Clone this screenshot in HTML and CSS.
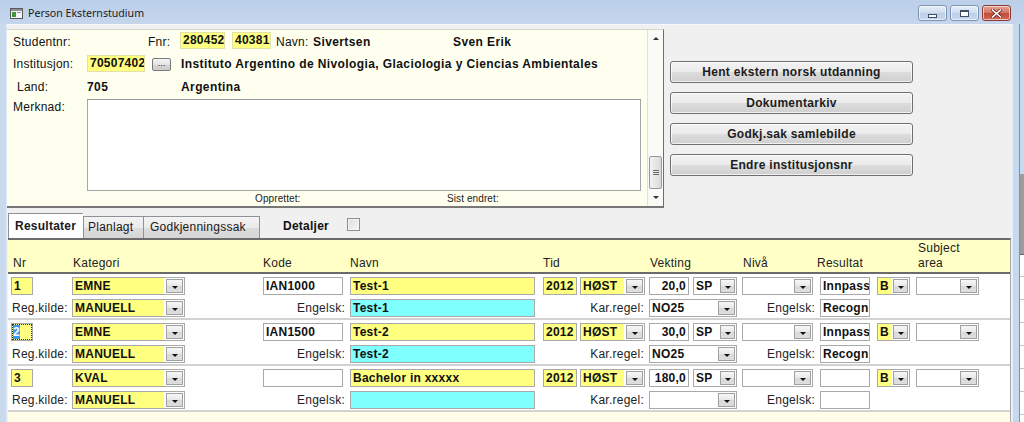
FILE: index.html
```html
<!DOCTYPE html>
<html lang="no">
<head>
<meta charset="utf-8">
<title>Person Eksternstudium</title>
<link rel="stylesheet" href="styles.css">
</head>
<body>
<div class="window">
  <div class="titlebar">
    <span class="app-icon">
      <svg width="13" height="11" viewBox="0 0 13 11"><rect x="0.5" y="0.5" width="12" height="10" fill="#f4f4f4" stroke="#5a5a5a"/><rect x="1" y="1" width="11" height="2" fill="#8a8f98"/><rect x="2" y="4" width="4" height="5" fill="#3c9a3c"/><rect x="7" y="4" width="4" height="1" fill="#999"/></svg>
    </span>
    <span class="title">Person Eksternstudium</span>
    <div class="controls">
      <span class="ctl"><i class="g-min"></i></span>
      <span class="ctl"><i class="g-max"></i></span>
      <span class="ctl ctl-close">
        <svg width="11" height="9" viewBox="0 0 11 9"><path d="M1.5 1 L9.5 8 M9.5 1 L1.5 8" stroke="#6b2a24" stroke-width="3.2" stroke-linecap="square"/><path d="M1.5 1 L9.5 8 M9.5 1 L1.5 8" stroke="#fff" stroke-width="1.6" stroke-linecap="square"/></svg>
      </span>
    </div>
  </div>
  <div class="frame">
    <div class="client">
      <div class="top">
        <div class="panel">
          <div class="pbody">
            <div class="prow r1">
              <span class="lbl l-stud">Studentnr:</span>
              <span class="lbl l-fnr">Fnr:</span>
              <span class="pf y f-fnr1">280452</span>
              <span class="pf y f-fnr2">40381</span>
              <span class="lbl l-navn">Navn:</span>
              <span class="val v-etter">Sivertsen</span>
              <span class="val">Sven Erik</span>
            </div>
            <div class="prow r2">
              <span class="lbl l-main">Institusjon:</span>
              <span class="pf y f-inst">70507402</span>
              <span class="dots">...</span>
              <span class="val v-instnavn">Instituto Argentino de Nivologia, Glaciologia y Ciencias Ambientales</span>
            </div>
            <div class="prow r3">
              <span class="lbl l-main l-land">Land:</span>
              <span class="val v-land">705</span>
              <span class="val">Argentina</span>
            </div>
            <div class="prow r4">
              <span class="lbl l-main l-merk">Merknad:</span>
              <div class="memo"></div>
            </div>
            <div class="prow r5">
              <span class="small s-opp">Opprettet:</span>
              <span class="small">Sist endret:</span>
            </div>
          </div>
          <div class="vscroll">
            <span class="sb-btn"><i class="arr-up"></i></span>
            <span class="sb-track"><span class="sb-thumb"><i></i><i></i><i></i></span></span>
            <span class="sb-btn"><i class="arr-down"></i></span>
          </div>
        </div>
        <div class="actions">
          <button class="btn">Hent ekstern norsk utdanning</button>
          <button class="btn">Dokumentarkiv</button>
          <button class="btn">Godkj.sak samlebilde</button>
          <button class="btn">Endre institusjonsnr</button>
        </div>
      </div>

      <div class="tabbar">
        <span class="tab active t-res">Resultater</span>
        <span class="tab t-plan">Planlagt</span>
        <span class="tab t-godk">Godkjenningssak</span>
        <span class="detaljer">Detaljer</span>
        <span class="chk"></span>
      </div>

      <div class="grid">
        <div class="ghead">
          <span class="h h-nr">Nr</span>
          <span class="h h-kat">Kategori</span>
          <span class="h h-kode">Kode</span>
          <span class="h h-navn">Navn</span>
          <span class="h h-tid">Tid</span>
          <span class="h h-vekt">Vekting</span>
          <span class="h h-niva">Nivå</span>
          <span class="h h-res">Resultat</span>
          <span class="h h-subj">Subject<br>area</span>
        </div>

        <div class="grow">
          <div class="line">
            <span class="f y c-nr">1</span>
            <span class="combo c-kat"><span class="cv y">EMNE</span><span class="dd"></span></span>
            <span class="f c-kode">IAN1000</span>
            <span class="f y c-navn">Test-1</span>
            <span class="f y c-aar">2012</span>
            <span class="combo c-sem"><span class="cv y">HØST</span><span class="dd"></span></span>
            <span class="f num c-vekt">20,0</span>
            <span class="combo c-sp"><span class="cv">SP</span><span class="dd"></span></span>
            <span class="combo c-niva"><span class="cv"></span><span class="dd"></span></span>
            <span class="f c-res"><span class="clip">Innpasset</span></span>
            <span class="combo c-kar"><span class="cv y">B</span><span class="dd"></span></span>
            <span class="combo c-subj"><span class="cv"></span><span class="dd"></span></span>
          </div>
          <div class="line second">
            <span class="rl rl-kilde">Reg.kilde:</span>
            <span class="combo c-kilde"><span class="cv y">MANUELL</span><span class="dd"></span></span>
            <span class="rl rl-eng">Engelsk:</span>
            <span class="f c c-eng">Test-1</span>
            <span class="rl rl-karr">Kar.regel:</span>
            <span class="combo c-karr"><span class="cv">NO25</span><span class="dd"></span></span>
            <span class="rl rl-eng2">Engelsk:</span>
            <span class="f c-res2"><span class="clip">Recognized</span></span>
          </div>
        </div>

        <div class="grow">
          <div class="line">
            <span class="f y c-nr focus"><span class="sel"><b class="hl">2</b></span></span>
            <span class="combo c-kat"><span class="cv y">EMNE</span><span class="dd"></span></span>
            <span class="f c-kode">IAN1500</span>
            <span class="f y c-navn">Test-2</span>
            <span class="f y c-aar">2012</span>
            <span class="combo c-sem"><span class="cv y">HØST</span><span class="dd"></span></span>
            <span class="f num c-vekt">30,0</span>
            <span class="combo c-sp"><span class="cv">SP</span><span class="dd"></span></span>
            <span class="combo c-niva"><span class="cv"></span><span class="dd"></span></span>
            <span class="f c-res"><span class="clip">Innpasset</span></span>
            <span class="combo c-kar"><span class="cv y">B</span><span class="dd"></span></span>
            <span class="combo c-subj"><span class="cv"></span><span class="dd"></span></span>
          </div>
          <div class="line second">
            <span class="rl rl-kilde">Reg.kilde:</span>
            <span class="combo c-kilde"><span class="cv y">MANUELL</span><span class="dd"></span></span>
            <span class="rl rl-eng">Engelsk:</span>
            <span class="f c c-eng">Test-2</span>
            <span class="rl rl-karr">Kar.regel:</span>
            <span class="combo c-karr"><span class="cv">NO25</span><span class="dd"></span></span>
            <span class="rl rl-eng2">Engelsk:</span>
            <span class="f c-res2"><span class="clip">Recognized</span></span>
          </div>
        </div>

        <div class="grow">
          <div class="line">
            <span class="f y c-nr">3</span>
            <span class="combo c-kat"><span class="cv y">KVAL</span><span class="dd"></span></span>
            <span class="f c-kode"></span>
            <span class="f y c-navn">Bachelor in xxxxx</span>
            <span class="f y c-aar">2012</span>
            <span class="combo c-sem"><span class="cv y">HØST</span><span class="dd"></span></span>
            <span class="f num c-vekt">180,0</span>
            <span class="combo c-sp"><span class="cv">SP</span><span class="dd"></span></span>
            <span class="combo c-niva"><span class="cv"></span><span class="dd"></span></span>
            <span class="f c-res"></span>
            <span class="combo c-kar"><span class="cv y">B</span><span class="dd"></span></span>
            <span class="combo c-subj"><span class="cv"></span><span class="dd"></span></span>
          </div>
          <div class="line second">
            <span class="rl rl-kilde">Reg.kilde:</span>
            <span class="combo c-kilde"><span class="cv y">MANUELL</span><span class="dd"></span></span>
            <span class="rl rl-eng">Engelsk:</span>
            <span class="f c c-eng"></span>
            <span class="rl rl-karr">Kar.regel:</span>
            <span class="combo c-karr"><span class="cv"></span><span class="dd"></span></span>
            <span class="rl rl-eng2">Engelsk:</span>
            <span class="f c-res2"></span>
          </div>
        </div>
      </div>
    </div>
    <div class="side">
      <span class="side-frame"></span>
      <span class="behind"></span>
    </div>
  </div>
</div>
</body>
</html>
```

FILE: styles.css
```css
* { box-sizing: border-box; margin: 0; padding: 0; }
html, body { width: 1024px; height: 422px; overflow: hidden; }
body {
  font-family: "Liberation Sans", Arial, sans-serif;
  font-size: 12px;
  letter-spacing: 0.25px;
  color: #111;
  background: #c7d8ee;
}

.window {
  width: 1024px;
  height: 422px;
  display: flex;
  flex-direction: column;
  background: linear-gradient(#bccfe9, #cbdaee 40px, #c8d8ed);
}

/* ---------- title bar ---------- */
.titlebar {
  height: 24px;
  display: flex;
  align-items: center;
  padding-left: 10px;
  flex: none;
}
.app-icon { display: flex; width: 13px; height: 11px; margin-top: 2px; }
.title {
  margin-left: 5px;
  font-family: "Noto Sans", "DejaVu Sans", sans-serif;
  font-size: 10.6px;
  letter-spacing: 0;
  color: #1b1b1b;
  margin-top: 1px;
}
.controls {
  margin-left: auto;
  margin-right: 13px;
  align-self: flex-start;
  margin-top: 5px;
  display: flex;
  gap: 3px;
}
.ctl {
  width: 29px;
  height: 16px;
  border: 1px solid #7d94b6;
  border-radius: 3px;
  background: linear-gradient(#e6eef8, #cfdcee 50%, #bccde6 51%, #c9d8ec);
  box-shadow: inset 0 0 0 1px rgba(255,255,255,.6);
  display: flex;
  align-items: center;
  justify-content: center;
}
.ctl-close {
  border-color: #8c3a32;
  background: linear-gradient(#e3a394, #d27563 50%, #c24a38 51%, #cf6c58);
}
.g-min {
  width: 9px; height: 4px;
  border: 1px solid #3e4e66;
  background: #fff;
  margin-top: 5px;
}
.g-max {
  width: 9px; height: 7px;
  border: 1px solid #3e4e66;
  border-top-width: 2px;
  background: #fff;
}

/* ---------- frame / client ---------- */
.frame {
  flex: 1;
  display: flex;
  padding-left: 7px;
  background: linear-gradient(90deg, #c9d9ee 0 6px, #dfe8f4 6px 7px, transparent 7px);
}
.client {
  width: 1005px;
  background: #f0f0f0;
  padding-top: 4px;
  display: flex;
  flex-direction: column;
  border-top: 1px solid #f6f8fb;
}
.side { width: 12px; display: flex; }
.side-frame {
  width: 8px;
  background: linear-gradient(90deg, #e6eef7 0 1px, #c6d9ef 1px);
  border-right: 1px solid #6e93c3;
}
.behind {
  width: 4px;
  background:
    linear-gradient(#c6d9ef 0 150px, #9c9c9c 150px 230px, #6a6a6a 230px 231px, transparent 231px),
    repeating-linear-gradient(#ffffff 0 22px, #c4c4c4 22px 23px);
}

/* ---------- top panel ---------- */
.top { display: flex; height: 179px; flex: none; }
.panel {
  width: 657px;
  height: 179px;
  display: flex;
  background: #fffff0;
  border-top: 1px solid #d6d6cc;
  border-right: 1px solid #6e6e6e;
  border-bottom: 2px solid #777;
}
.pbody { width: 640px; padding: 1px 0 0 6px; display: flex; flex-direction: column; }
.prow { display: flex; align-items: center; }
.r1 { height: 21px; }
.r2 { height: 24px; }
.r3 { height: 22px; }
.r4 { height: 93px; align-items: flex-start; margin-top: 1px; }
.r5 { height: 13px; }

.lbl { white-space: nowrap; }
.l-stud { width: 135px; }
.l-fnr { width: 32px; }
.l-navn { width: 37px; margin-left: 5px; }
.l-main { width: 74px; }
.l-land { padding-left: 4px; }
.l-merk { margin-top: 1px; }
.val { font-weight: bold; white-space: nowrap; letter-spacing: 0.4px; }
.v-etter { width: 140px; }
.v-land { width: 94px; }

.pf {
  height: 17px;
  line-height: 15px;
  border: 1px solid #e1e1a8;
  padding: 0 2px;
  font-weight: bold;
  margin-top: -2px;
  white-space: nowrap;
  overflow: hidden;
}
.y { background: #ffff80; }
.f-fnr1 { width: 45px; }
.f-fnr2 { width: 39px; margin-left: 7px; }
.f-inst { width: 58px; }

.dots {
  width: 19px;
  height: 13px;
  margin-left: 7px;
  margin-right: 10px;
  border: 1px solid #7a7a7a;
  border-radius: 2px;
  background: linear-gradient(#f4f4f4, #e4e4e4 50%, #d4d4d4 51%, #cfcfcf);
  font-size: 9px;
  line-height: 9px;
  letter-spacing: 0;
  text-align: center;
  color: #222;
}

.memo {
  width: 554px;
  height: 92px;
  background: #fff;
  border: 1px solid #a5a5a5;
  border-top-color: #9a9a9a;
}
.small { font-size: 10px; letter-spacing: 0.1px; color: #222; }
.s-opp { margin-left: 242px; width: 192px; }

.vscroll {
  width: 16px;
  display: flex;
  flex-direction: column;
  background: #fafaf6;
  border-left: 1px solid #e2e2dc;
}
.sb-btn { height: 17px; display: flex; align-items: center; justify-content: center; }
.arr-up { border-left: 3px solid transparent; border-right: 3px solid transparent; border-bottom: 3px solid #333; }
.arr-down { border-left: 3px solid transparent; border-right: 3px solid transparent; border-top: 3px solid #333; }
.sb-track { flex: 1; display: flex; flex-direction: column; justify-content: flex-end; padding: 0 1px; }
.sb-thumb {
  height: 33px;
  border: 1px solid #9a9a9a;
  border-radius: 2px;
  background: linear-gradient(90deg, #f3f3f3, #e4e4e4 60%, #d8d8d8);
  display: flex;
  flex-direction: column;
  align-items: center;
  justify-content: center;
  gap: 1px;
}
.sb-thumb i { width: 6px; height: 1px; background: #6a6a6a; }

.actions {
  margin-left: 6px;
  padding-top: 32px;
  display: flex;
  flex-direction: column;
  gap: 9px;
  width: 243px;
}
.btn {
  height: 22px;
  border: 1px solid #707070;
  border-radius: 3px;
  background: linear-gradient(#f2f2f2, #ebebeb 50%, #dddddd 51%, #cfcfcf);
  box-shadow: inset 0 0 0 1px rgba(255,255,255,.7);
  font-family: "Liberation Sans", Arial, sans-serif;
  font-size: 12px;
  letter-spacing: 0.3px;
  font-weight: bold;
  color: #1c1c1c;
}

/* ---------- tabs ---------- */
.tabbar {
  height: 30px;
  flex: none;
  display: flex;
  align-items: flex-end;
  padding-left: 1px;
}
.tab {
  height: 22px;
  line-height: 20px;
  border: 1px solid #8e9198;
  border-bottom: none;
  background: linear-gradient(#f3f3f3, #ebebeb 50%, #dcdcdc 51%, #d6d6d6);
  white-space: nowrap;
  color: #1a1a1a;
}
.tab.active {
  height: 25px;
  line-height: 24px;
  background: #fff;
  font-weight: bold;
  border-right: none;
}
.t-res { width: 75px; padding-left: 6px; }
.t-plan { width: 61px; padding-left: 4px; }
.t-godk { width: 116px; padding-left: 6px; border-left: none; }
.detaljer { margin-left: 23px; font-weight: bold; align-self: center; margin-top: 5px; }
.chk {
  margin-left: 18px;
  width: 13px;
  height: 13px;
  align-self: center;
  margin-top: 3px;
  border: 1px solid #8f8f8f;
  background: linear-gradient(135deg, #dcdcdc, #f8f8f8);
  box-shadow: inset 0 0 0 1px #f4f4f4;
}

/* ---------- grid ---------- */
.grid {
  flex: 1;
  margin-left: 1px;
  width: 1003px;
  border-top: 2px solid #6b6b6b;
  border-right: 1px solid #a8a8a8;
  background: #fffce8;
  display: flex;
  flex-direction: column;
}
.ghead {
  height: 34px;
  flex: none;
  background: #ffffc6;
  border-bottom: 2px solid #6b6b6b;
  display: flex;
  align-items: flex-end;
  padding-bottom: 1px;
  padding-left: 5px;
  line-height: 15px;
  color: #222;
}
.h { white-space: nowrap; }
.h-nr { width: 60px; }
.h-kat { width: 190px; }
.h-kode { width: 87px; }
.h-navn { width: 193px; }
.h-tid { width: 107px; }
.h-vekt { width: 93px; }
.h-niva { width: 74px; }
.h-res { width: 101px; }

.grow {
  background: #fff;
  padding: 3px 0 1px;
  border-bottom: 2px solid #d2d2d2;
  flex: none;
}
.line { display: flex; height: 18px; align-items: center; }
.line.second { margin-top: 4px; }

.f {
  height: 18px;
  line-height: 16px;
  border: 1px solid #a9a9a9;
  background: #fff;
  font-weight: bold;
  padding: 0 2px;
  overflow: hidden;
  white-space: nowrap;
  color: #111;
  flex: none;
}
.f.y { background: #ffff80; }
.f.c { background: #80ffff; }
.num { text-align: right; }
.clip { display: block; overflow: hidden; white-space: nowrap; }

.combo {
  height: 18px;
  display: flex;
  border: 1px solid #a9a9a9;
  background: #fff;
  flex: none;
}
.cv {
  flex: 1;
  min-width: 0;
  font-weight: bold;
  line-height: 16px;
  padding: 0 2px;
  overflow: hidden;
  white-space: nowrap;
}
.dd {
  width: 17px;
  height: 14px;
  margin: 1px 1px 1px 2px;
  border: 1px solid #a0a0a0;
  background: linear-gradient(#f7f7f7, #e8e8e8 50%, #d9d9d9 51%, #dedede);
  display: flex;
  align-items: center;
  justify-content: center;
  flex: none;
}
.dd::after {
  content: "";
  margin-top: 2px;
  border-left: 3px solid transparent;
  border-right: 3px solid transparent;
  border-top: 3px solid #111;
}

.c-nr { width: 22px; margin-left: 3px; }
.c-kat { width: 113px; margin-left: 39px; }
.c-kode { width: 80px; margin-left: 78px; }
.c-navn { width: 185px; margin-left: 7px; }
.c-aar { width: 34px; margin-left: 8px; }
.c-sem { width: 65px; margin-left: 3px; }
.c-vekt { width: 40px; margin-left: 4px; }
.c-sp { width: 44px; margin-left: 4px; }
.c-sp .dd { width: 15px; }
.c-niva { width: 71px; margin-left: 5px; }
.c-res { width: 50px; margin-left: 7px; padding-right: 0; }
.c-kar { width: 33px; margin-left: 7px; }
.c-kar .cv { flex: none; width: 14px; }
.c-kar .dd { width: 15px; margin-left: 1px; }
.c-subj { width: 63px; margin-left: 6px; }

.rl { white-space: nowrap; color: #222; flex: none; }
.rl-kilde { width: 64px; padding-left: 4px; }
.c-kilde { width: 113px; }
.rl-eng { width: 160px; text-align: right; }
.c-eng { width: 185px; margin-left: 5px; }
.rl-karr { width: 109px; text-align: right; }
.c-karr { width: 88px; margin-left: 5px; }
.rl-eng2 { width: 78px; text-align: right; }
.c-res2 { width: 50px; margin-left: 5px; padding-right: 0; }

.focus { padding: 1px; }
.focus .sel {
  display: block;
  height: 14px;
  line-height: 14px;
  outline: 1px dotted #333;
}
.hl { background: #3399ff; color: #fff; font-weight: bold; }
```
